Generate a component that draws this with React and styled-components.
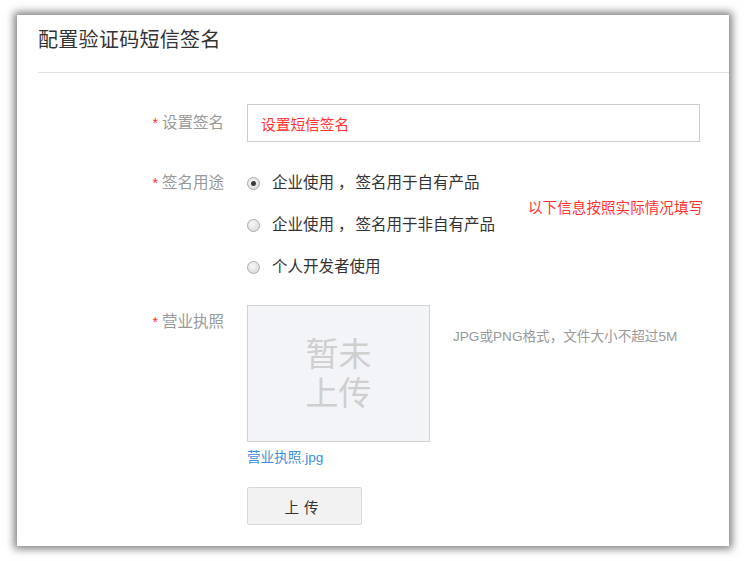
import { createGlobalStyle, styled } from "styled-components";

const GlobalStyle = createGlobalStyle`
  html, body {
    margin: 0;
    padding: 0;
    background: #ffffff;
  }
  body {
    font-family: "Liberation Sans", "Noto Sans CJK SC", sans-serif;
    font-size: 14px;
    color: #333;
  }
`;

const Page = styled.div`
  padding: 15px 17px 15px 17px;
`;

const Card = styled.div`
  width: 712px;
  height: 531px;
  background: #fff;
  box-shadow: 0 0 8px 3px rgba(0, 0, 0, 0.5);
  overflow: hidden;
`;

const Header = styled.div`
  margin-left: 21px;
  height: 58px;
  box-sizing: border-box;
  padding-top: 11px;
  border-bottom: 1px solid #e3e3e3;
`;

const Title = styled.h1`
  margin: 0;
  font-size: 20px;
  line-height: 28px;
  font-weight: normal;
  color: #333;
  letter-spacing: 0.3px;
`;

const Form = styled.div`
  padding: 31px 0 0 21px;
  display: flex;
  flex-direction: column;
`;

const Row = styled.div`
  display: grid;
  grid-template-columns: 186px 1fr;
  column-gap: 23px;
  align-items: ${(p) => (p.$center ? "center" : "start")};
  margin-bottom: ${(p) => p.$mb || 0}px;
`;

const Label = styled.div`
  text-align: right;
  line-height: 20px;
  color: #999;
  font-size: 15.5px;
  padding-top: ${(p) => p.$pt || 0}px;
  white-space: nowrap;

  &::before {
    content: "*";
    color: #e33;
    font-size: 14px;
    margin-right: 4px;
  }
`;

const TextInput = styled.div`
  width: 453px;
  height: 38px;
  box-sizing: border-box;
  border: 1px solid #ccc;
  padding: 0 13px;
  display: flex;
  align-items: center;
  color: #f33;
  font-size: 14.7px;
`;

const Options = styled.div`
  display: flex;
  align-items: flex-start;
`;

const RadioGroup = styled.div`
  width: 281px;
  display: flex;
  flex-direction: column;
  gap: 22px;
`;

const RadioItem = styled.div`
  display: flex;
  align-items: center;
  height: 20px;
  line-height: 20px;
  font-size: 15.5px;
  color: #333;
  white-space: nowrap;
`;

const RadioDot = styled.span`
  flex: none;
  width: 13px;
  height: 13px;
  box-sizing: border-box;
  border-radius: 50%;
  border: 1px solid #aaa;
  background: radial-gradient(circle at 40% 35%, #f8f8f8, #d4d4d4);
  margin: 0 12px 0 0;
  position: relative;

  &::after {
    content: "";
    display: ${(p) => (p.$checked ? "block" : "none")};
    position: absolute;
    left: 3px;
    top: 3px;
    width: 5px;
    height: 5px;
    border-radius: 50%;
    background: #3a3a3a;
  }
`;

const Comma = styled.span`
  padding: 0 2px 0 4px;
`;

const Note = styled.div`
  margin-top: 25px;
  line-height: 20px;
  color: #f33;
  font-size: 14.6px;
  white-space: nowrap;
`;

const UploadArea = styled.div`
  display: flex;
  flex-direction: column;
  align-items: flex-start;
`;

const PreviewRow = styled.div`
  display: flex;
  align-items: flex-start;
`;

const Preview = styled.div`
  width: 183px;
  height: 137px;
  box-sizing: border-box;
  border: 1px solid #d3d3d3;
  background: #f3f4f8;
  display: flex;
  align-items: center;
  justify-content: center;
  text-align: center;
  color: #cfcfcf;
  font-size: 33px;
  line-height: 39px;
`;

const Hint = styled.div`
  margin: 22px 0 0 23px;
  line-height: 20px;
  font-size: 13.6px;
  color: #999;
  white-space: nowrap;
`;

const FileName = styled.a`
  margin-top: 6px;
  line-height: 20px;
  font-size: 13.6px;
  color: #3d8fd9;
  text-decoration: none;
`;

const Button = styled.button`
  margin-top: 19px;
  width: 115px;
  height: 38px;
  border: 1px solid #d8d8d8;
  border-radius: 2px;
  background: #f2f2f2;
  color: #333;
  font-family: inherit;
  font-size: 14.5px;
  letter-spacing: 5px;
  padding-left: 5px;
  cursor: pointer;
`;

const App = () => {
  return (
    <Page>
      <GlobalStyle />
      <Card>
        <Header>
          <Title>配置验证码短信签名</Title>
        </Header>
        <Form>
          <Row $center $mb={31}>
            <Label>设置签名</Label>
            <TextInput>设置短信签名</TextInput>
          </Row>
          <Row $mb={28}>
            <Label>签名用途</Label>
            <Options>
              <RadioGroup>
                <RadioItem>
                  <RadioDot $checked />
                  企业使用<Comma>，</Comma>签名用于自有产品
                </RadioItem>
                <RadioItem>
                  <RadioDot />
                  企业使用<Comma>，</Comma>签名用于非自有产品
                </RadioItem>
                <RadioItem>
                  <RadioDot />
                  个人开发者使用
                </RadioItem>
              </RadioGroup>
              <Note>以下信息按照实际情况填写</Note>
            </Options>
          </Row>
          <Row>
            <Label $pt={7}>营业执照</Label>
            <UploadArea>
              <PreviewRow>
                <Preview>
                  暂未
                  <br />
                  上传
                </Preview>
                <Hint>JPG或PNG格式，文件大小不超过5M</Hint>
              </PreviewRow>
              <FileName href="#">营业执照.jpg</FileName>
              <Button>上传</Button>
            </UploadArea>
          </Row>
        </Form>
      </Card>
    </Page>
  );
};

export default App;
